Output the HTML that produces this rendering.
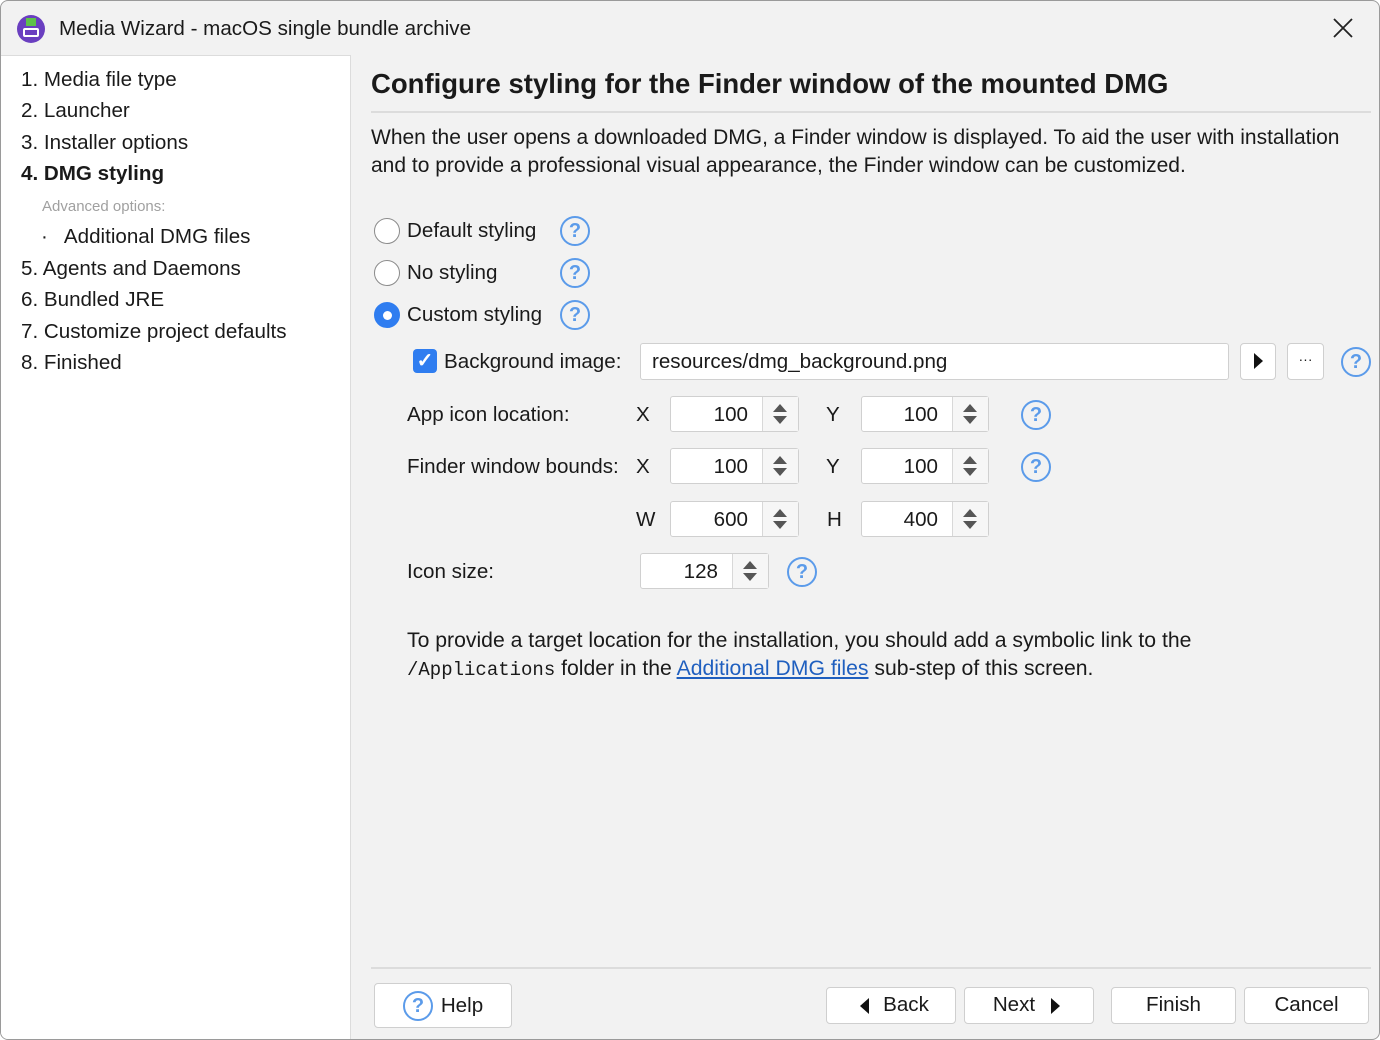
<!DOCTYPE html>
<html><head><style>
body{margin:0;width:1380px;height:1040px;overflow:hidden;background:#fff;font-family:"Liberation Sans",sans-serif;color:#1a1a1a;}
.win{position:absolute;left:0;top:0;width:1378px;height:1038px;border:1px solid #9a9a9a;border-radius:8px;background:#f2f2f2;overflow:hidden}
.a{position:absolute;white-space:nowrap}
.t{font-size:20.6px}
.left{position:absolute;left:0;top:54px;width:349px;height:990px;background:#fff;border-right:1px solid #dcdcdc;border-top:1px solid #dcdcdc}
.q{position:absolute;width:26px;height:26px;border:2px solid #5b9bea;border-radius:50%;color:#5b9bea;font-size:20px;font-weight:bold;text-align:center;line-height:26px;box-sizing:content-box}
.radio{position:absolute;width:24px;height:24px;border:1.5px solid #8a8a8a;border-radius:50%;background:#fff}
.box{position:absolute;background:#fff;border:1px solid #d0d0d0;border-radius:3px;box-sizing:border-box}
.spin{position:absolute;height:36px;background:#fff;border:1px solid #d0d0d0;border-radius:3px;box-sizing:border-box}
.spin .v{position:absolute;right:50px;top:6px;font-size:20.6px}
.spin .s{position:absolute;right:0;top:0;width:35px;height:34px;border-left:1px solid #d8d8d8;background:#f6f6f6}
.up{position:absolute;left:10px;top:7px;border-left:7px solid transparent;border-right:7px solid transparent;border-bottom:8px solid #555}
.dn{position:absolute;left:10px;top:19px;border-left:7px solid transparent;border-right:7px solid transparent;border-top:8px solid #555}
.btn{position:absolute;background:#fff;border:1px solid #cfcfcf;border-radius:4px;box-sizing:border-box;font-size:20.6px;text-align:center;line-height:34px}
</style></head><body><div class="win">
<div class="a" style="left:16px;top:14px;width:28px;height:28px;border-radius:50%;background:#6a3fc0"></div>
<div class="a" style="left:22px;top:27px;width:16px;height:9px;border:2px solid #fff;border-radius:2px;box-sizing:border-box;background:#6a3fc0"></div>
<div class="a" style="left:25px;top:17px;width:10px;height:8px;background:#5ec24a"></div>
<div class="a t" style="left:58px;top:16px">Media Wizard - macOS single bundle archive</div>
<svg class="a" style="left:1332px;top:17px" width="20" height="20"><path d="M1 1L19 19M19 1L1 19" stroke="#222" stroke-width="1.8"/></svg>
<div class="left"></div>
<div class="a t" style="left:20px;top:67px">1. Media file type</div>
<div class="a t" style="left:20px;top:98px">2. Launcher</div>
<div class="a t" style="left:20px;top:130px">3. Installer options</div>
<div class="a t" style="left:20px;top:161px;font-weight:bold">4. DMG styling</div>
<div class="a" style="left:41px;top:197px;font-size:15px;color:#a0a0a0">Advanced options:</div>
<div class="a t" style="left:40px;top:224px">·&nbsp;&nbsp; Additional DMG files</div>
<div class="a t" style="left:20px;top:256px">5. Agents and Daemons</div>
<div class="a t" style="left:20px;top:287px">6. Bundled JRE</div>
<div class="a t" style="left:20px;top:319px">7. Customize project defaults</div>
<div class="a t" style="left:20px;top:350px">8. Finished</div>
<div class="a" style="left:370px;top:67px;font-size:27.5px;font-weight:bold">Configure styling for the Finder window of the mounted DMG</div>
<div class="a" style="left:370px;top:110px;width:1000px;height:2px;background:#dcdcdc"></div>
<div class="a t" style="left:370px;top:123px;line-height:28px;font-size:21px">When the user opens a downloaded DMG, a Finder window is displayed. To aid the user with installation<br>and to provide a professional visual appearance, the Finder window can be customized.</div>
<div class="radio" style="left:373px;top:217px"></div><div class="a t" style="left:406px;top:218px">Default styling</div><div class="q" style="left:559px;top:215px">?</div>
<div class="radio" style="left:373px;top:259px"></div><div class="a t" style="left:406px;top:260px">No styling</div><div class="q" style="left:559px;top:257px">?</div>
<div class="radio" style="left:373px;top:301px;background:#2f7df0;border-color:#2f7df0"></div><div class="a" style="left:382px;top:310px;width:9px;height:9px;border-radius:50%;background:#fff"></div><div class="a t" style="left:406px;top:302px">Custom styling</div><div class="q" style="left:559px;top:299px">?</div>
<div class="a" style="left:412px;top:348px;width:24px;height:24px;border-radius:4px;background:#2f7df0;color:#fff;font-size:20px;text-align:center;line-height:24px;font-weight:bold">✓</div>
<div class="a t" style="left:443px;top:349px">Background image:</div>
<div class="box" style="left:639px;top:342px;width:589px;height:37px"></div><div class="a t" style="left:651px;top:349px">resources/dmg_background.png</div>
<div class="btn" style="left:1239px;top:342px;width:36px;height:37px"></div><div class="a" style="left:1253px;top:352px;border-top:8px solid transparent;border-bottom:8px solid transparent;border-left:9px solid #111"></div>
<div class="btn" style="left:1286px;top:342px;width:37px;height:37px;line-height:30px;font-size:14px">···</div>
<div class="q" style="left:1340px;top:346px">?</div>
<div class="a t" style="left:406px;top:402px">App icon location:</div>
<div class="a t" style="left:635px;top:402px">X</div><div class="spin" style="left:669px;top:395px;width:129px"><span class="v">100</span><div class="s"><i class="up"></i><i class="dn"></i></div></div>
<div class="a t" style="left:825px;top:402px">Y</div><div class="spin" style="left:860px;top:395px;width:128px"><span class="v">100</span><div class="s"><i class="up"></i><i class="dn"></i></div></div>
<div class="q" style="left:1020px;top:399px">?</div>
<div class="a t" style="left:406px;top:454px">Finder window bounds:</div>
<div class="a t" style="left:635px;top:454px">X</div><div class="spin" style="left:669px;top:447px;width:129px"><span class="v">100</span><div class="s"><i class="up"></i><i class="dn"></i></div></div>
<div class="a t" style="left:825px;top:454px">Y</div><div class="spin" style="left:860px;top:447px;width:128px"><span class="v">100</span><div class="s"><i class="up"></i><i class="dn"></i></div></div>
<div class="q" style="left:1020px;top:451px">?</div>
<div class="a t" style="left:635px;top:507px">W</div><div class="spin" style="left:669px;top:500px;width:129px"><span class="v">600</span><div class="s"><i class="up"></i><i class="dn"></i></div></div>
<div class="a t" style="left:826px;top:507px">H</div><div class="spin" style="left:860px;top:500px;width:128px"><span class="v">400</span><div class="s"><i class="up"></i><i class="dn"></i></div></div>
<div class="a t" style="left:406px;top:559px">Icon size:</div>
<div class="spin" style="left:639px;top:552px;width:129px"><span class="v">128</span><div class="s"><i class="up"></i><i class="dn"></i></div></div>
<div class="q" style="left:786px;top:556px">?</div>
<div class="a t" style="left:406px;top:626px;line-height:28px;font-size:21.2px">To provide a target location for the installation, you should add a symbolic link to the<br><span style="font-family:'Liberation Mono',monospace;font-size:19px">/Applications</span> folder in the <span style="color:#1f5fbf;text-decoration:underline">Additional DMG files</span> sub-step of this screen.</div>
<div class="a" style="left:370px;top:966px;width:1000px;height:2px;background:#dcdcdc"></div>
<div class="btn" style="left:373px;top:982px;width:138px;height:45px;line-height:43px;padding-left:38px">Help</div><div class="q" style="left:402px;top:990px">?</div>
<div class="btn" style="left:825px;top:986px;width:130px;height:37px;padding-left:30px">Back</div><div class="a" style="left:859px;top:997px;border-top:8px solid transparent;border-bottom:8px solid transparent;border-right:9px solid #111"></div>
<div class="btn" style="left:963px;top:986px;width:130px;height:37px;padding-right:30px">Next</div><div class="a" style="left:1050px;top:997px;border-top:8px solid transparent;border-bottom:8px solid transparent;border-left:9px solid #111"></div>
<div class="btn" style="left:1110px;top:986px;width:125px;height:37px">Finish</div>
<div class="btn" style="left:1243px;top:986px;width:125px;height:37px">Cancel</div>
</div></body></html>
